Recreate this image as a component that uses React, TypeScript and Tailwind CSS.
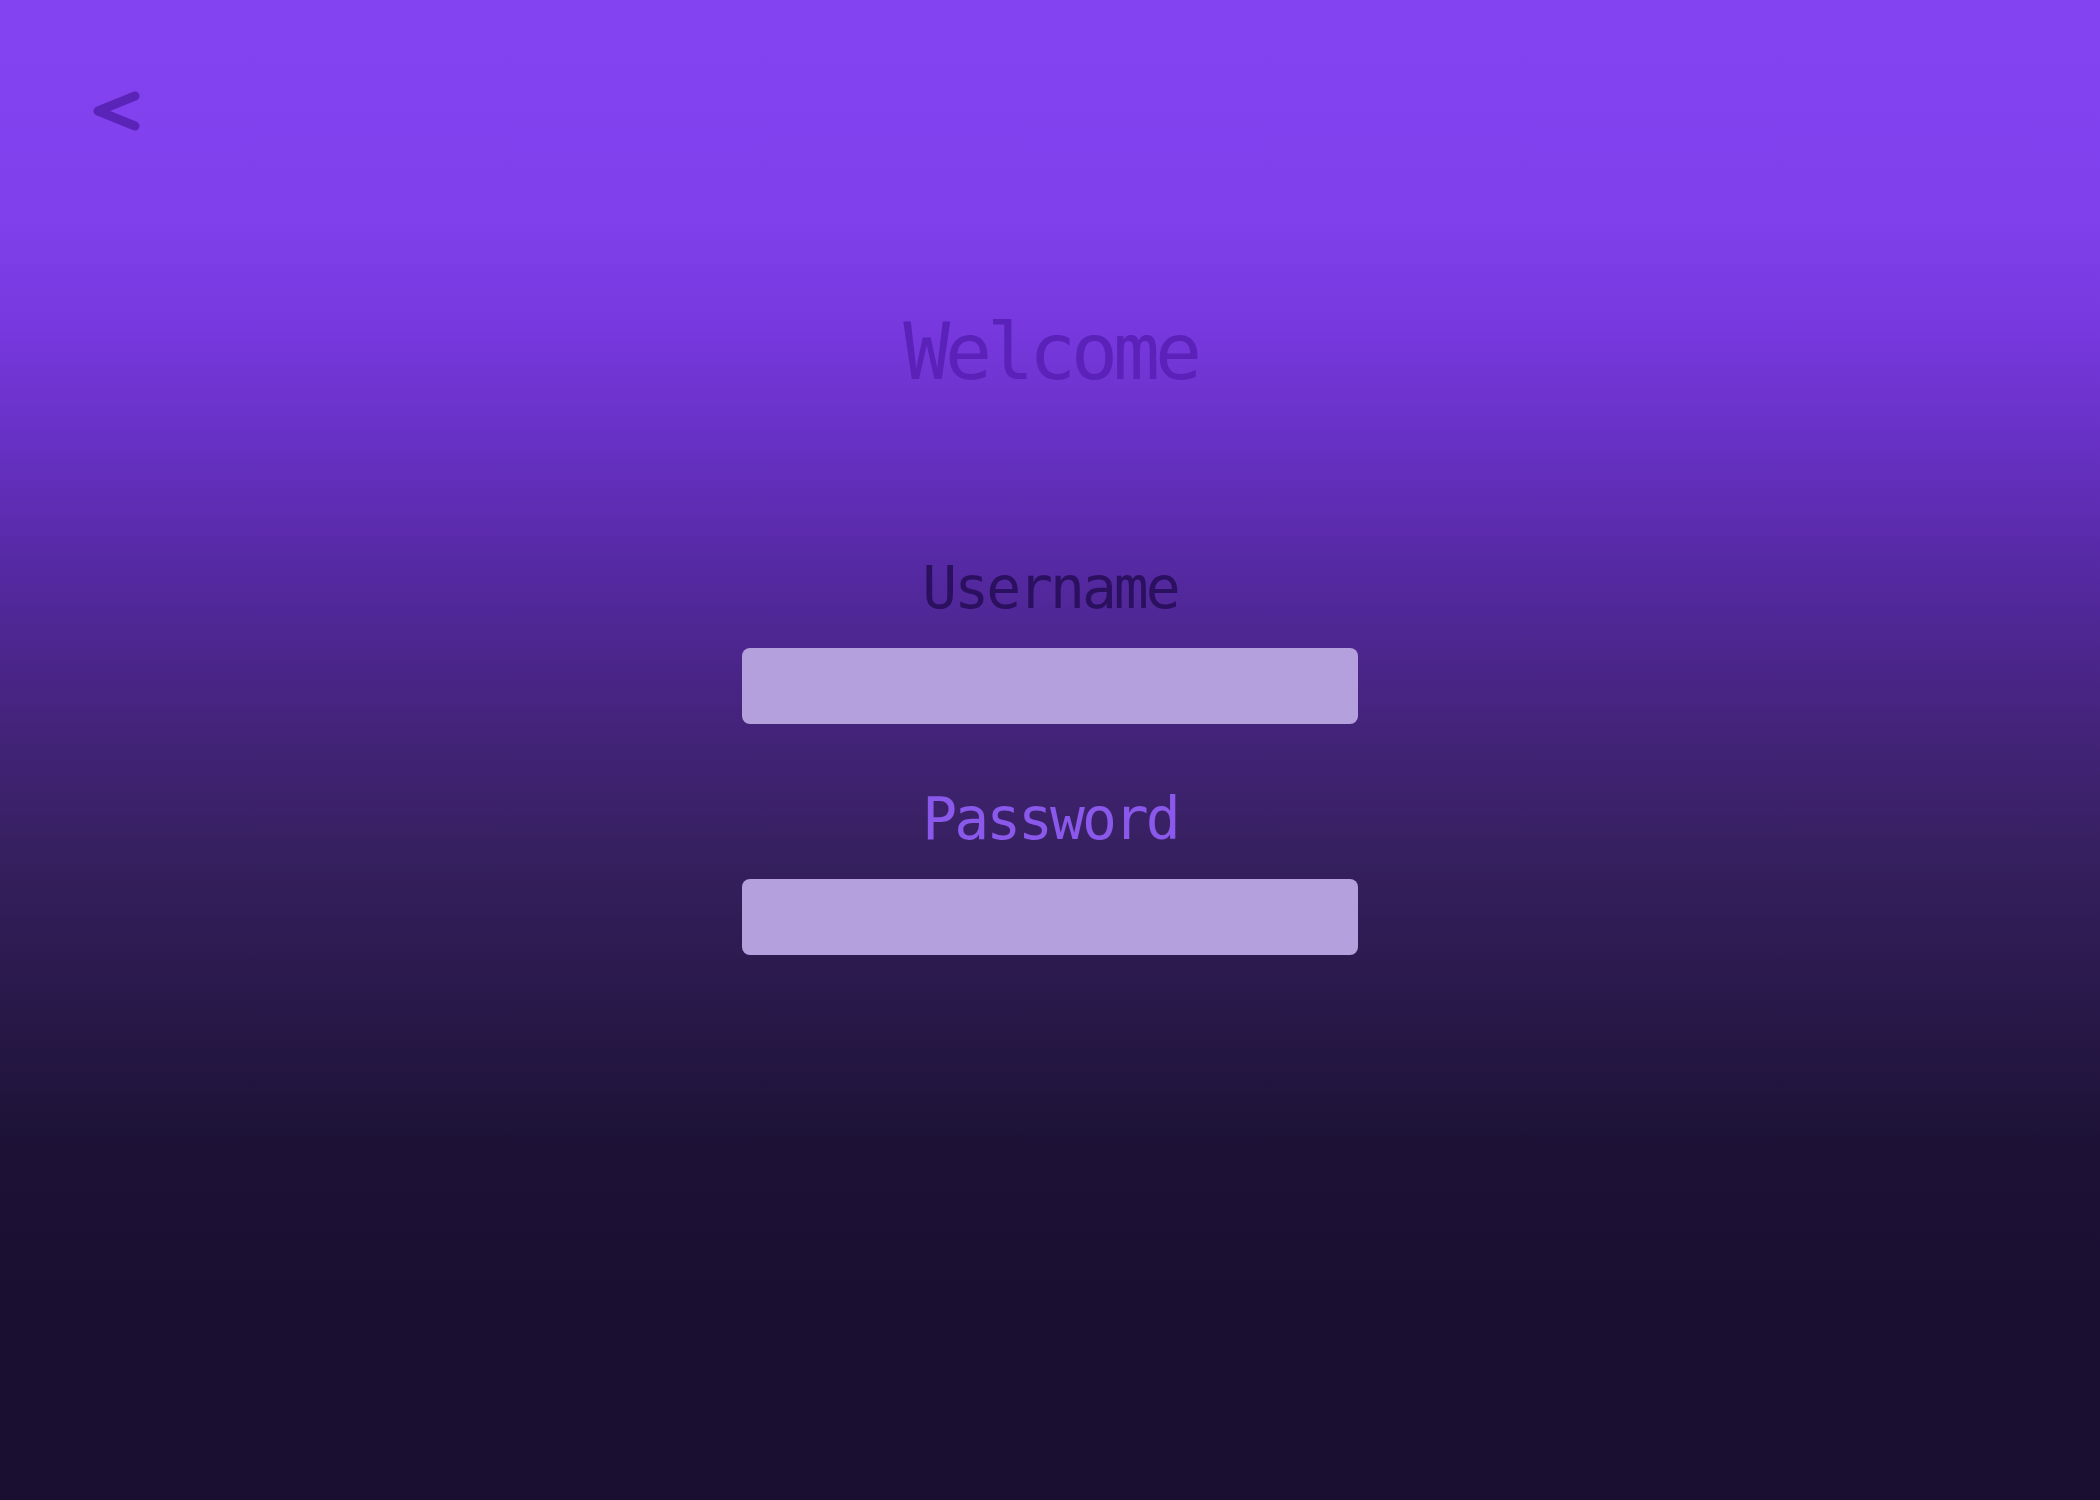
const Field = (props: { label: string; color: string; type?: string }) => (
  <div className="flex flex-col items-center">
    <label
      className={`text-[58px] leading-none tracking-[-3px] ${props.color}`}
    >
      {props.label}
    </label>
    <input
      type={props.type ?? 'text'}
      className="mt-[31px] w-[616px] h-[76px] rounded-lg bg-[#b4a0dc] outline-none border-0 px-4 text-2xl text-[#2c1060]"
    />
  </div>
);

export default function App() {
  return (
    <div
      className="min-h-screen w-full flex flex-col bg-[linear-gradient(180deg,#8443f0_0%,#8040ec_14%,#7738de_22%,#6630c2_30%,#5529a2_38%,#46247f_47%,#36205f_57%,#281849_67%,#1d1236_76%,#1a0f30_88%,#1a0f30_100%)]"
      style={{ fontFamily: '"DejaVu Sans Mono", "Liberation Mono", monospace' }}
    >
      <div className="pl-[90px] pt-[90px]">
        <button className="block" aria-label="Back">
          <svg width="50" height="44" viewBox="0 0 50 44" fill="none">
            <polyline
              points="45,6 8,21 45,36"
              stroke="#5b24b8"
              strokeWidth="9"
              strokeLinecap="round"
              strokeLinejoin="round"
            />
          </svg>
        </button>
      </div>

      <main className="mt-[179px] flex flex-col items-center">
        <h1 className="text-[78px] leading-none tracking-[-5px] text-[#5a22b8] font-normal">
          Welcome
        </h1>

        <div className="mt-[168px]">
          <Field label="Username" color="text-[#2c1060]" />
        </div>
        <div className="mt-[66px]">
          <Field label="Password" color="text-[#8a58ea]" type="password" />
        </div>
      </main>
    </div>
  );
}
